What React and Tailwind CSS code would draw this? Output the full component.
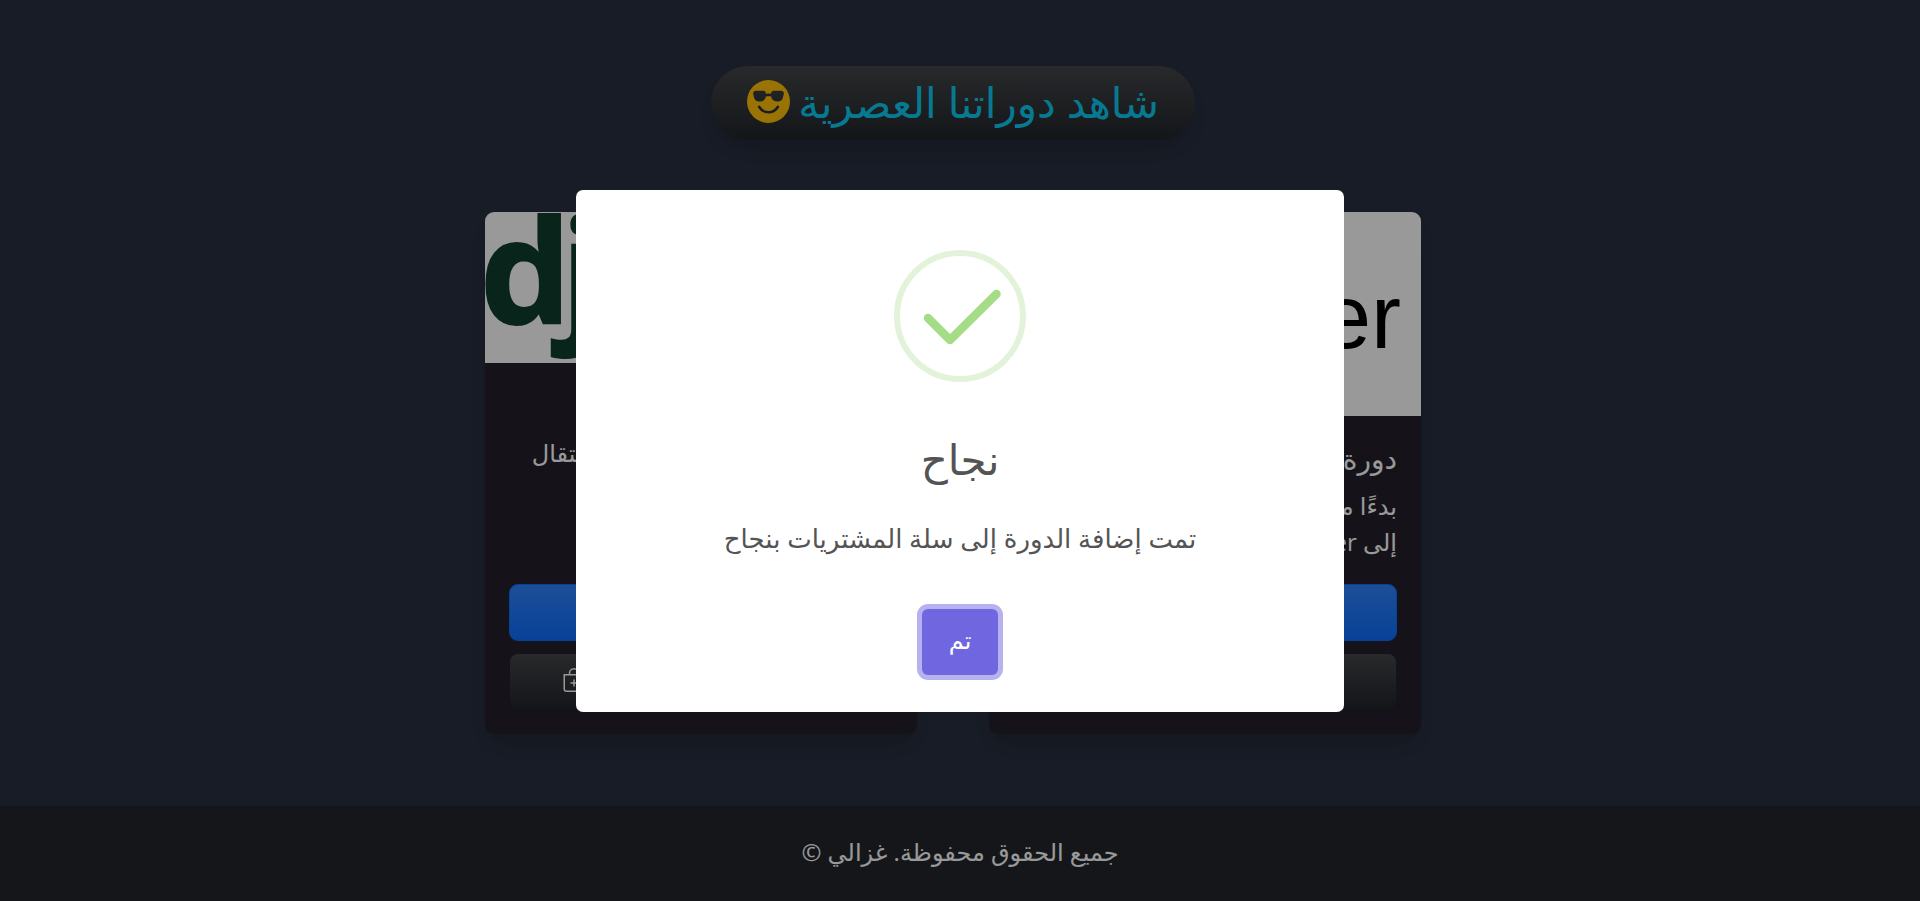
import { BsBagPlus, BsEmojiSunglassesFill } from "react-icons/bs";

const gloss = "bg-linear-to-b from-white/15 to-transparent";

function DjangoLogo() {
  return (
    <svg viewBox="0 0 432 151" direction="ltr" className="block w-full bg-white" role="img" aria-label="django">
      <text x="-5 76" y="111" fontFamily="Open Sans" fontWeight="700" fontSize="144" fill="#103e2e" stroke="#103e2e" strokeWidth="2">
        django
      </text>
    </svg>
  );
}

function DockerLogo() {
  return (
    <svg viewBox="0 0 432 204" direction="ltr" className="block w-full bg-white" role="img" aria-label="docker">
      <text x="412" y="136" textAnchor="end" fontFamily="Liberation Sans" fontSize="90" fill="#000">
        docker
      </text>
    </svg>
  );
}

function CourseCard({ image, title, lines }) {
  return (
    <article className="flex w-[432px] flex-col overflow-hidden rounded-[9px] bg-[#23212a] shadow-[0_12px_24px_rgba(0,0,0,0.15)]">
      {image}
      <div className="flex grow flex-col p-6">
        <h2 className="mb-3 text-[28px] leading-9">{title}</h2>
        <p className="mb-6 text-2xl leading-9">
          {lines.map((line) => (
            <span key={line} className="block whitespace-nowrap">
              {line}
            </span>
          ))}
        </p>
        <div className="mt-auto flex flex-col gap-3">
          <button type="button" className={`h-[57px] rounded-[9px] border border-[#0d6efd] bg-[#0d6efd] text-2xl ${gloss}`}>
            عرض الدورة
          </button>
          <button type="button" className={`flex h-[57px] items-center justify-end gap-3 rounded-[9px] border border-[#23212a] bg-[#212529] px-[52px] pb-1 text-2xl ${gloss}`}>
            أضف إلى السلة
            <BsBagPlus className="size-6" />
          </button>
        </div>
      </div>
    </article>
  );
}

function SuccessDialog() {
  return (
    <div className="fixed inset-0 flex items-center justify-center bg-black/40">
      <div role="dialog" aria-modal="true" aria-labelledby="dialog-title" className="flex w-[768px] flex-col items-center rounded-[7px] bg-white pt-[60px] pb-[37px] text-[#545454]">
        <svg viewBox="0 0 132 132" className="size-[132px]" fill="none" aria-hidden="true">
          <circle cx="66" cy="66" r="63" stroke="#e3f3da" strokeWidth="6" />
          <path d="M34 68 L56 90 L102.500 44" stroke="#a5dc86" strokeWidth="8.500" strokeLinecap="round" strokeLinejoin="round" />
        </svg>
        <h2 id="dialog-title" className="mt-[50px] text-[42px] leading-[54px]">نجاح</h2>
        <p className="mt-[34px] text-[26px] leading-9">تمت إضافة الدورة إلى سلة المشتريات بنجاح</p>
        <button type="button" className="mt-[53px] h-[66px] w-[76px] rounded-md bg-[#7066e0] pb-1 text-2xl text-white shadow-[0_0_0_5px_#b7b2ef]">
          تم
        </button>
      </div>
    </div>
  );
}

export default function App() {
  return (
    <div dir="rtl" className="flex min-h-screen flex-col bg-[#283041] font-['Open_Sans','DejaVu_Sans',sans-serif] text-white">
      <main className="mr-[14px] flex flex-col items-center gap-[72px] pt-[66px] pb-[72px]">
        <h1 className={`flex h-[74px] items-center gap-2 rounded-full bg-[#212529] px-9 pb-1 text-[42px] text-[#0dcaf0] shadow-[0_12px_24px_rgba(0,0,0,0.15)] ${gloss}`}>
          شاهد دوراتنا العصرية
          <BsEmojiSunglassesFill className="size-[43px] text-[#ffc107]" />
        </h1>
        <div className="flex justify-center gap-[72px]">
          <CourseCard
            image={<DockerLogo />}
            title="دورة Docker"
            lines={["بدءًا من الأساسيات وصولاً", "إلى Docker"]}
          />
          <CourseCard
            image={<DjangoLogo />}
            title="دورة Django"
            lines={["نتعلم أساسيات دجانغو أولاً ثم الانتقال", "إلى الاحتراف"]}
          />
        </div>
      </main>
      <footer className="grow bg-[#24262a] pt-7 pb-6 text-center text-2xl leading-9">جميع الحقوق محفوظة. غزالي ©</footer>
      <SuccessDialog />
    </div>
  );
}
